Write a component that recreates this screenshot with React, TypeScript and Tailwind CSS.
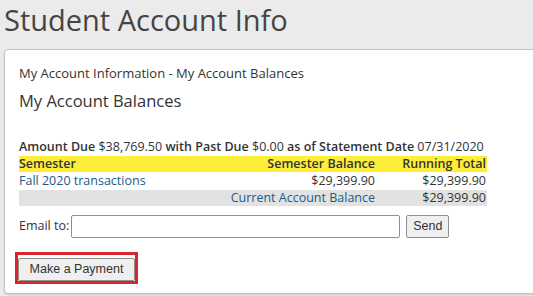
export default function App() {
  return (
    <div className="min-h-[296px] bg-[#ebebeb] font-['Open_Sans',sans-serif] text-[#333] overflow-hidden">
      <h1 className="pl-[4px] text-[29px] leading-[40px] text-[#444]">Student Account Info</h1>
      <div className="mt-[9px] ml-[4px] mr-[-10px] rounded-[4px] border border-[#c4c4c4] bg-white pl-[14px] pr-[56px] pt-[14px] pb-[9px] shadow-[0_1px_2px_rgba(0,0,0,0.15)]">
        <p className="text-[13px] leading-[18px]">My Account Information - My Account Balances</p>
        <h2 className="mt-[8px] text-[16.5px] leading-[22px]">My Account Balances</h2>
        <p className="mt-[25px] text-[12.5px] leading-[19px]">
          <b className="font-semibold">Amount Due</b> $38,769.50 <b className="font-semibold">with Past Due</b> $0.00{' '}
          <b className="font-semibold">as of Statement Date</b> 07/31/2020
        </p>
        <div className="w-[468px] text-[12.5px] leading-[16px]">
          <div className="flex h-[16px] items-center bg-[#fdee3a] font-semibold">
            <div className="flex-1">Semester</div>
            <div className="text-right">Semester Balance</div>
            <div className="w-[112px] pr-[1px] text-right">Running Total</div>
          </div>
          <div className="flex h-[18px] items-center">
            <a className="flex-1 text-[#1a5a8c]">Fall 2020 transactions</a>
            <div className="text-right">$29,399.90</div>
            <div className="w-[112px] pr-[1px] text-right">$29,399.90</div>
          </div>
          <div className="flex h-[16px] items-center bg-[#e2e2e2]">
            <div className="flex-1" />
            <a className="text-right text-[#1a5a8c]">Current Account Balance</a>
            <div className="w-[112px] pr-[1px] text-right">$29,399.90</div>
          </div>
        </div>
        <div className="mt-[9px] flex items-center">
          <label className="text-[12.5px]">Email to:</label>
          <input className="ml-[2px] h-[23px] w-[329px] rounded-[2px] border border-[#8f8f8f] bg-white" />
          <button className="ml-[6px] h-[23px] w-[43px] rounded-[2px] border border-[#8f8f8f] bg-[#efefef] font-['Liberation_Sans',Arial,sans-serif] text-[12.5px] text-[#333]">
            Send
          </button>
        </div>
        <div className="mt-[14px] ml-[-4px] inline-block border-[3px] border-[#d8262e]">
          <button className="h-[23px] w-[117px] rounded-[2px] border border-[#8f8f8f] bg-[#efefef] font-['Liberation_Sans',Arial,sans-serif] text-[12.5px] text-[#333]">
            Make a Payment
          </button>
        </div>
      </div>
    </div>
  );
}
